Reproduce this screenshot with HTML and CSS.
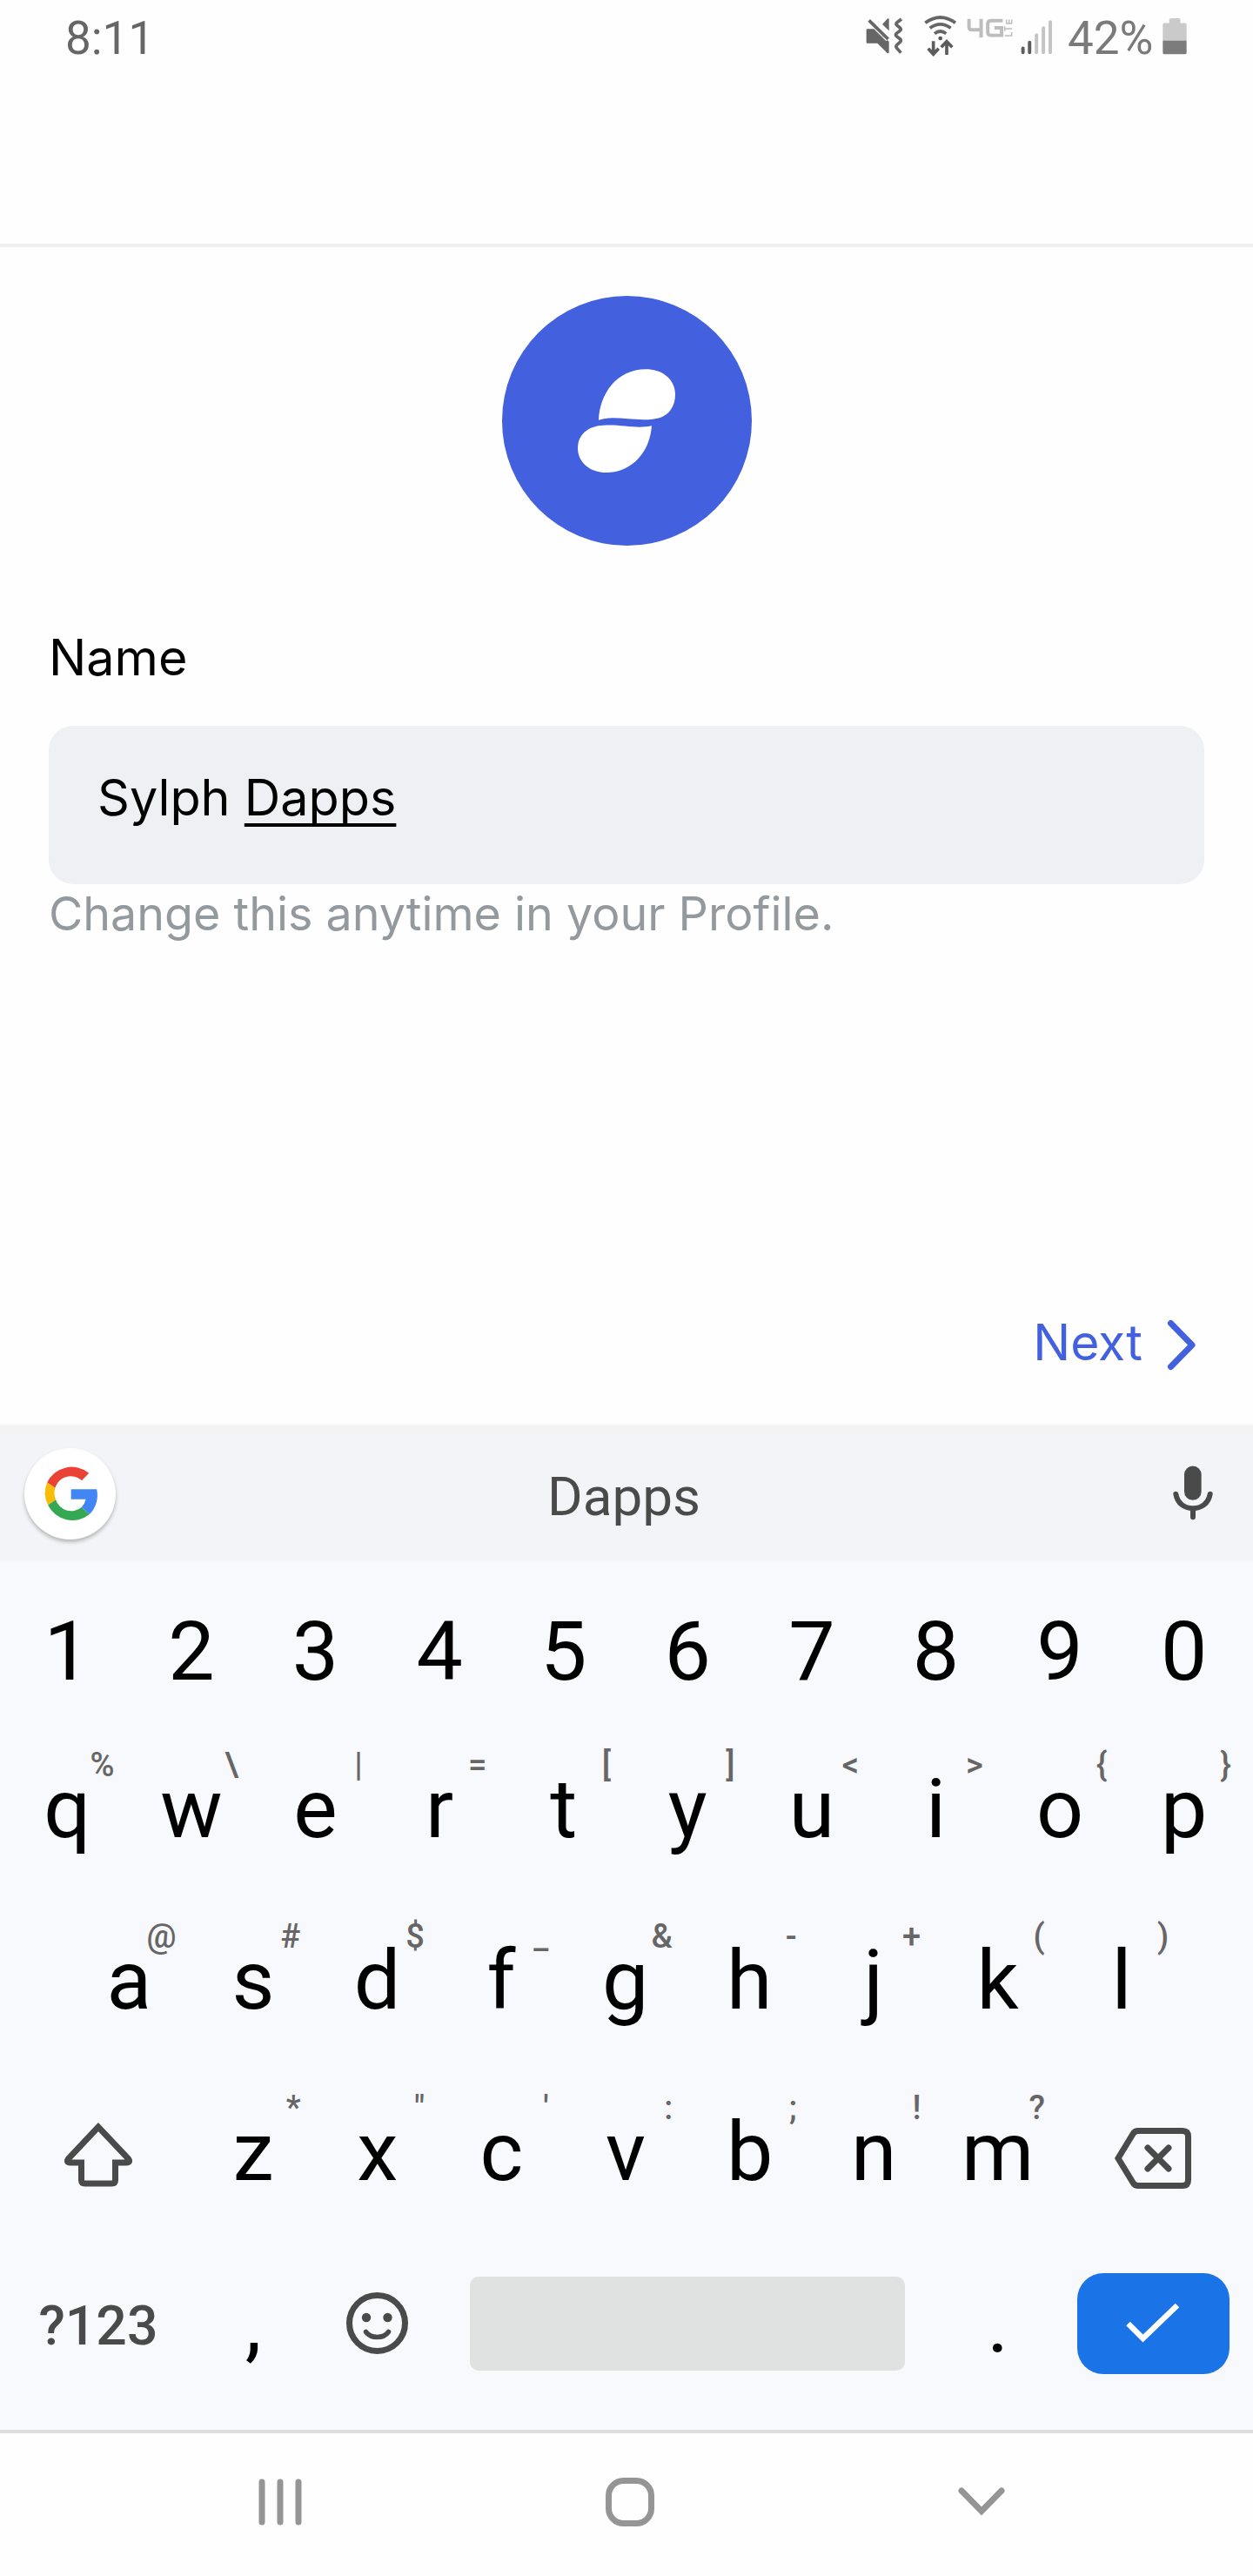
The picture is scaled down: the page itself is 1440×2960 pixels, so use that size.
FILE: index.html
```html
<!DOCTYPE html>
<html lang="en">
<head>
<meta charset="utf-8">
<title>Name</title>
<link rel="stylesheet" href="styles.css">
</head>
<body>
<div class="status">
  <span class="clock">8:11</span>
  <div class="status-icons">
    <svg class="i-mute" viewBox="105 60 129 129"><g fill="#666"><path d="M109 100H138L185 143V181Q183 186 178 182L145 149H110Q107 149 107 146V102Z"/><path d="M162 84L179 65Q185 60 185 68V106Z"/></g><path d="M116 70L182 135" stroke="#fefefe" stroke-width="19"/><path d="M116 70L182 135M228 66L213 77Q207 82 212 87L223 96Q229 101 223 106L211 115Q206 120 211 125L223 134Q229 140 223 145L212 155Q207 161 213 167L226 182" fill="none" stroke="#666" stroke-width="11"/></svg>
    <svg class="i-wifi" viewBox="304 50 114 144"><g fill="none" stroke="#666" stroke-width="11"><path d="M308 78Q360 40 412 78M324 96Q360 69 396 96M340 115Q360 99 380 115"/><path d="M336 141V184M318 166L336 186L354 166M382 188V144M363 162L382 142L401 162" stroke="#5c5c5c"/></g><circle cx="360" cy="131" r="7" fill="#555"/></svg>
    <svg class="i-lte" viewBox="450 64 160 66"><g fill="none" stroke="#bdbdbd" stroke-width="12"><path d="M458 66V94Q458 104 468 104H506M500 66V130M575 72H534Q523 72 523 83V112Q523 123 534 123H571V97H546"/><path d="M588 68V82H606V68M597 68V82M582 92V108M582 100H607M582 124H606V112" stroke-width="4.5"/></g></svg>
    <svg class="i-signal" viewBox="635 66 112 122"><g stroke-width="12" stroke-linecap="round"><path d="M643 166V181M666 146V181" stroke="#5e5e5e"/><path d="M690 120V181M714 96V181M738 75V181" stroke="#c4c4c4"/></g></svg>
    <span class="battery-text">42%</span>
    <svg class="i-battery" viewBox="1130 60 86 130"><path d="M1131 142V84Q1131 79 1136 79H1154V67Q1154 62 1159 62H1188Q1193 62 1193 67V79H1210Q1215 79 1215 84V142Z" fill="#cacaca"/><path d="M1131 141H1215V183Q1215 189 1209 189H1137Q1131 189 1131 183Z" fill="#7c7c7c"/></svg>
  </div>
</div>
<header class="topbar"></header>
<main class="content">
  <svg class="avatar" viewBox="51 59 861 861"><circle cx="481.500" cy="489.500" r="430.500" fill="#4360df"/><path fill="#fff" d="M384 487C387 400 444 312 547 312C610 312 648 352 648 398C648 446 620 480 570 484C520 489 480 480 432 480C412 480 398 483 384 487ZM567 507C562 590 503 668 412 668C350 668 312 630 312 583C312 540 345 507 400 505C450 502 485 511 525 511C545 511 556 509 567 507Z"/></svg>
  <label class="name-label">Name</label>
  <div class="field"><span class="field-text">Sylph <span class="composing">Dapps</span></span></div>
  <p class="helper">Change this anytime in your Profile.</p>
  <div class="next"><span>Next</span><svg class="chevron" viewBox="0 0 32 57"><path d="M3.500 3.500L28 28.500L3.500 53.500" fill="none" stroke="#4360df" stroke-width="7" stroke-linecap="round" stroke-linejoin="round"/></svg></div>
</main>
<section class="keyboard">
  <div class="suggestions">
    <span class="google"><svg viewBox="148 194 186 190"><path fill="#ea4335" d="M160 250A94.500 94.500 0 0 1 305 217L280 243A56 56 0 0 0 188 269Z"/><path fill="#fbbc05" d="M160 250A94.500 94.500 0 0 0 163 328L190 309A56 56 0 0 1 188 269Z"/><path fill="#34a853" d="M163 328A94.500 94.500 0 0 0 307 360L279 336A56 56 0 0 1 190 309Z"/><path fill="#4285f4" d="M307 360A94.500 94.500 0 0 0 332 273H243V308H294A56 56 0 0 1 279 336Z"/></svg></span>
    <span class="suggestion">Dapps</span>
    <svg class="mic" viewBox="745 673 138 188"><rect x="784" y="674" width="59" height="118" rx="29.500" fill="#4a4a4a"/><path d="M755 771C760 803 785 820 814 820C843 820 868 803 873 771M814 822V850" fill="none" stroke="#4a4a4a" stroke-width="18" stroke-linecap="round"/></svg>
  </div>
  <div class="row numbers"><span class="key">1</span><span class="key">2</span><span class="key">3</span><span class="key">4</span><span class="key">5</span><span class="key">6</span><span class="key">7</span><span class="key">8</span><span class="key">9</span><span class="key">0</span></div>
  <div class="row"><span class="key">q<i>%</i></span><span class="key">w<i>\</i></span><span class="key">e<i>|</i></span><span class="key">r<i>=</i></span><span class="key">t<i>[</i></span><span class="key">y<i>]</i></span><span class="key">u<i>&lt;</i></span><span class="key">i<i>&gt;</i></span><span class="key">o<i>{</i></span><span class="key">p<i>}</i></span></div>
  <div class="row middle"><span class="key">a<i>@</i></span><span class="key">s<i>#</i></span><span class="key">d<i>$</i></span><span class="key">f<i>_</i></span><span class="key">g<i>&amp;</i></span><span class="key">h<i>-</i></span><span class="key">j<i>+</i></span><span class="key">k<i>(</i></span><span class="key">l<i>)</i></span></div>
  <div class="row">
    <span class="key wide"><svg class="shift" viewBox="0 0 80 75"><path d="M40 6L6 42Q2 47 8 47H20.500V67Q20.500 71 24.500 71H55.500Q59.500 71 59.500 67V47H72Q78 47 74 42Z" fill="none" stroke="#4a4a4a" stroke-width="7"/></svg></span>
    <span class="key">z<i>*</i></span><span class="key">x<i>"</i></span><span class="key">c<i>'</i></span><span class="key">v<i>:</i></span><span class="key">b<i>;</i></span><span class="key">n<i>!</i></span><span class="key">m<i>?</i></span>
    <span class="key wide"><svg class="backspace" viewBox="0 0 88 70"><path d="M4 35L21 7Q23 3.500 27 3.500H78Q84.500 3.500 84.500 10V60Q84.500 66.500 78 66.500H27Q23 66.500 21 63Z" fill="none" stroke="#4a4a4a" stroke-width="7"/><path d="M38 23L62 47M62 23L38 47" stroke="#4a4a4a" stroke-width="7" stroke-linecap="round"/></svg></span>
  </div>
  <div class="row">
    <span class="key wide symbols">?123</span>
    <span class="key">,</span>
    <span class="key"><svg class="emoji" viewBox="0 0 71 71"><circle cx="35.500" cy="35.500" r="32" fill="none" stroke="#4a4a4a" stroke-width="7"/><circle cx="23" cy="29" r="5.200" fill="#4a4a4a"/><circle cx="47.500" cy="29" r="5.200" fill="#4a4a4a"/><path d="M22.500 45.500Q27 51.500 35.500 51.500Q44 51.500 48.500 45.500" fill="none" stroke="#4a4a4a" stroke-width="5.500" stroke-linecap="round"/></svg></span>
    <span class="key space-cell"><span class="space"></span></span>
    <span class="key">.</span>
    <span class="key wide"><span class="enter"><svg viewBox="0 0 62 47"><path d="M2.500 24L19.500 41L59 3" fill="none" stroke="#fff" stroke-width="6.500"/></svg></span></span>
  </div>
</section>
<nav class="navbar">
  <svg class="recents" viewBox="0 0 50 54"><path d="M4 4V50M25 4V50M46 4V50" stroke="#959595" stroke-width="7" stroke-linecap="round"/></svg>
  <svg class="home" viewBox="0 0 56 56"><rect x="3.500" y="3.500" width="49" height="49" rx="17" fill="none" stroke="#959595" stroke-width="7"/></svg>
  <svg class="back" viewBox="0 0 54 34"><path d="M4 4L27 27.500L50 4" fill="none" stroke="#959595" stroke-width="7" stroke-linecap="round"/></svg>
</nav>
</body>
</html>
```
FILE: styles.css
```css
* { box-sizing: border-box; }
body { margin: 0; width: 1440px; height: 2960px; background: #fefefe; font-family: Roboto, sans-serif; display: flex; flex-direction: column; overflow: hidden; }
svg { display: block; flex: none; overflow: visible; }
.status { height: 88px; padding: 0 74px 0 75px; display: flex; justify-content: space-between; font-size: 53px; line-height: 88px; color: #666; flex: none; }
.status-icons { display: flex; width: 371px; }
.i-mute { width: 43px; height: 43px; margin: 20px 24px 0 0; }
.i-wifi { width: 38px; height: 48px; margin: 17px 11px 0 0; }
.i-lte { width: 53px; height: 22px; margin: 21px 9px 0 0; }
.i-signal { width: 37px; height: 41px; margin: 22px 17px 0 0; }
.battery-text { flex: none; color: #7a7a7a; width: 103px; }
.i-battery { width: 28px; height: 43px; margin: 20px 0 0 6px; }
.topbar { height: 196px; border-bottom: 4px solid #efefef; flex: none; }
.content { height: 1350px; padding: 56px 56px 0; flex: none; display: flex; flex-direction: column; font-family: Inter, sans-serif; font-size: 57.5px; color: #000; }
.avatar { width: 287px; height: 287px; align-self: center; }
.name-label { margin-top: 88px; height: 80px; line-height: 80px; }
.field { margin-top: 39px; height: 182px; border-radius: 28px; background: #eef0f4; padding: 42px 56px; line-height: 80px; flex: none; }
.field-text { display: block; }
.composing { text-decoration: underline; text-decoration-thickness: 4px; text-underline-offset: 9px; text-decoration-skip-ink: none; }
.helper { margin: 0; height: 68px; line-height: 68px; font-size: 53.8px; color: #94999e; }
.next { margin-top: 419px; height: 80px; line-height: 80px; padding-right: 10px; display: flex; justify-content: flex-end; align-items: center; gap: 29px; font-size: 57px; color: #4360df; }
.chevron { width: 32px; height: 57px; margin-top: 4px; }
.keyboard { height: 1158px; flex: none; background: #f8f9fc; }
.suggestions { height: 161px; padding: 0 46px 0 28px; display: flex; align-items: center; justify-content: space-between; background: linear-gradient(#fefefe 0, #f3f3f3 5px, #f3f3f3 11px, #f2f4f7 15px, #f2f4f7 158px, #f8f9fc 161px); }
.google { width: 105px; height: 105px; margin-top: 4px; border-radius: 50%; background: #fff; box-shadow: 0 3px 4px rgba(0,0,0,.25); display: flex; align-items: center; justify-content: center; }
.google svg { width: 62px; height: 63px; }
.suggestion { font-size: 62px; line-height: 80px; color: #4a4a4a; margin-left: -47px; margin-top: 11px; }
.mic { width: 46px; height: 63px; margin-top: 2px; }
.row { height: 197px; padding: 0 6px; display: flex; font-size: 95px; line-height: 197px; color: #000; }
.numbers { height: 185px; padding-top: 20px; line-height: 165px; }
.middle { padding: 0 77px; }
.key { position: relative; width: 142.6px; flex: none; display: flex; justify-content: center; align-items: center; }
.wide { width: 213.9px; }
.key i { position: absolute; right: 17px; top: 28px; font-size: 38px; line-height: 40px; font-style: normal; font-weight: 500; color: #666; }
.shift { width: 80px; height: 75px; margin-top: 6px; }
.backspace { width: 88px; height: 70px; margin-top: 14px; }
.symbols { font-size: 62.5px; font-weight: 500; color: #4a4a4a; padding-top: 5px; }
.emoji { width: 71px; height: 71px; }
.space-cell { width: 570.4px; }
.space { width: 500px; height: 108px; border-radius: 10px; background: #e0e2e1; }
.enter { width: 175px; height: 116px; border-radius: 30px; background: #1b73e8; display: flex; align-items: center; justify-content: center; }
.enter svg { width: 62px; height: 47px; }
.navbar { height: 168px; flex: none; border-top: 4px solid #dedede; display: flex; align-items: center; padding: 0 285px 7px 297px; justify-content: space-between; }
.recents { width: 50px; height: 54px; }
.home { width: 56px; height: 56px; }
.back { width: 54px; height: 34px; }
```
